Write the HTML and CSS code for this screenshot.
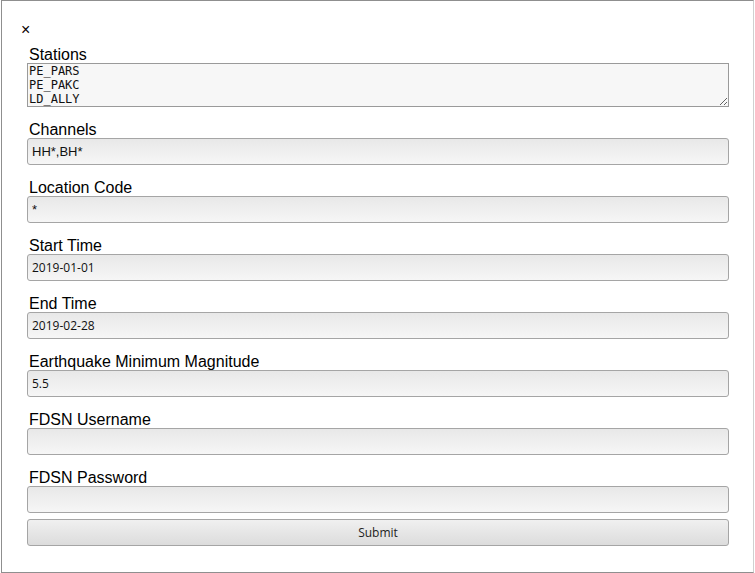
FILE: index.html
```html
<!DOCTYPE html>
<html>
<head>
<meta charset="utf-8">
<link rel="stylesheet" href="styles.css">
</head>
<body>
<div class="dialog">
  <div class="close">×</div>
  <form class="form">
    <label class="field">
      <span class="label">Stations</span>
      <textarea class="area" spellcheck="true">PE_PARS
PE_PAKC
LD_ALLY</textarea>
    </label>
    <label class="field">
      <span class="label">Channels</span>
      <input class="input sans" type="text" value="HH*,BH*">
    </label>
    <label class="field">
      <span class="label">Location Code</span>
      <input class="input sans" type="text" value="*">
    </label>
    <label class="field">
      <span class="label">Start Time</span>
      <input class="input open" type="text" value="2019-01-01">
    </label>
    <label class="field">
      <span class="label">End Time</span>
      <input class="input open" type="text" value="2019-02-28">
    </label>
    <label class="field">
      <span class="label">Earthquake Minimum Magnitude</span>
      <input class="input open" type="text" value="5.5">
    </label>
    <label class="field">
      <span class="label">FDSN Username</span>
      <input class="input open" type="text" value="">
    </label>
    <label class="field last">
      <span class="label">FDSN Password</span>
      <input class="input open" type="password" value="">
    </label>
    <button class="submit" type="button">Submit</button>
  </form>
</div>
</body>
</html>
```

FILE: styles.css
```css
html, body {
  margin: 0;
  padding: 0;
  background: #fff;
}
body {
  font-family: "Liberation Sans", Arial, sans-serif;
}
.dialog {
  margin-left: 1px;
  width: 751px;
  height: 571px;
  border: 1px solid #8f8f8f;
  border-right-color: #d0d0d0;
  box-sizing: content-box;
}
.close {
  font-family: "Liberation Sans", Arial, sans-serif;
  font-size: 16px;
  line-height: 18px;
  color: #0a0000;
  margin: 20px 0 0 19px;
  height: 17px;
}
.form {
  display: flex;
  flex-direction: column;
  padding: 0 25px 0 25px;
  margin-top: 7px;
}
.field {
  display: flex;
  flex-direction: column;
  margin-bottom: 13px;
}
.field.last {
  margin-bottom: 6px;
}
.label {
  font-size: 16px;
  line-height: 17px;
  padding-top: 1px;
  color: #000;
  padding-left: 2px;
}
.area {
  box-sizing: border-box;
  width: 702px;
  height: 44px;
  margin: 0;
  border: 1px solid #9a9a9a;
  background: #f7f7f7;
  font-family: "DejaVu Sans Mono", monospace;
  font-size: 12px;
  line-height: 14px;
  padding: 0 1px;
  color: #111;
  resize: both;
}
.input {
  box-sizing: border-box;
  width: 702px;
  height: 27px;
  margin: 0;
  border: 1px solid #a5a5a5;
  border-radius: 3px;
  background: linear-gradient(#e8e8e8, #f6f6f6);
  padding: 0 4px;
  font-size: 12px;
  color: #111;
  outline: none;
}
.input.sans {
  font-family: "Liberation Sans", Arial, sans-serif;
  font-size: 13px;
}
.input.open {
  font-family: "Open Sans", sans-serif;
  font-size: 12px;
}
.submit {
  box-sizing: border-box;
  width: 702px;
  height: 27px;
  margin: 0;
  border: 1px solid #a5a5a5;
  border-radius: 3px;
  background: linear-gradient(#f0f0f0, #dcdcdc);
  font-family: "Open Sans", sans-serif;
  font-size: 12px;
  color: #222;
  padding: 0;
}
```
